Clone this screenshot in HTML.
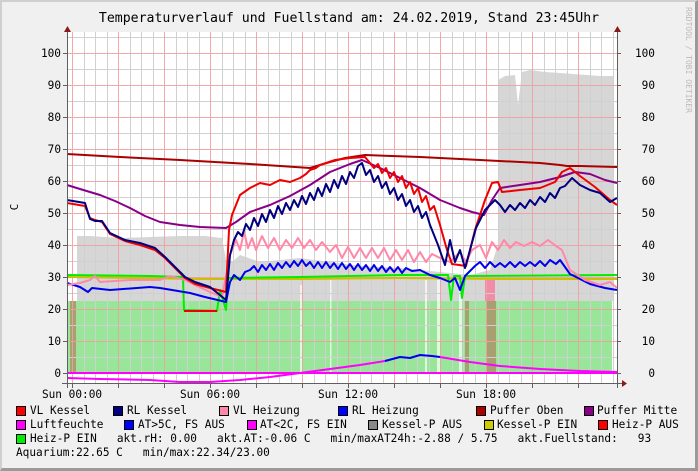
<!DOCTYPE html>
<html><head><meta charset="utf-8"><style>
html,body{margin:0;padding:0}
body{width:698px;height:471px;background:#f0f0f0;position:relative;overflow:hidden;font-family:"DejaVu Sans Mono","Liberation Mono",monospace;}
.frame{position:absolute;left:0;top:0;border-top:2px solid #cfcfcf;border-left:2px solid #cfcfcf;border-right:3px solid #9a9a9a;border-bottom:3px solid #9a9a9a;box-sizing:border-box;width:698px;height:471px}
.t{position:absolute;font-size:11.1px;color:#000;white-space:pre;line-height:12px}
.sq{position:absolute;width:8px;height:8px;border:1px solid #000}
</style></head><body>
<div class="frame"></div>
<svg width="698" height="471" style="position:absolute;left:0;top:0" xmlns="http://www.w3.org/2000/svg">
<rect x="67" y="32" width="550" height="351" fill="#fff"/>
<polygon fill="#d6d6d6" points="77,301 77,236 90,236 120,238 150,237 180,236 205,236 222,238 226,260 232,262 240,255 260,262 300,258 330,262 360,266 400,268 440,272 470,275 490,270 498,244 498,80 505,76 515,75 518,105 522,72 530,70 545,72 560,73 600,76 614,76 614,301"/>
<rect x="67" y="301" width="545" height="72" fill="#99e599"/>
<g fill="#fff" opacity="0.7"><rect x="300" y="285" width="2" height="88"/><rect x="330" y="280" width="1.5" height="93"/><rect x="425" y="280" width="2" height="93"/><rect x="437" y="280" width="3" height="93"/><rect x="459" y="290" width="3" height="83"/></g>
<rect x="485" y="280" width="10" height="21" fill="#f08ca8"/>
<g fill="#a8a070"><rect x="70" y="301" width="6" height="72"/><rect x="465" y="301" width="4" height="72"/><rect x="486" y="301" width="10" height="72"/></g>
<g stroke="#d0d0d0" stroke-width="1">
<path d="M67.5,357.5H617M67.5,325.5H617M67.5,293.5H617M67.5,261.5H617M67.5,229.5H617M67.5,197.5H617M67.5,165.5H617M67.5,133.5H617M67.5,101.5H617M67.5,69.5H617M67.5,37.5H617"/>
<path d="M84.5,32V383M95.5,32V383M107.5,32V383M130.5,32V383M141.5,32V383M153.5,32V383M176.5,32V383M187.5,32V383M199.5,32V383M222.5,32V383M233.5,32V383M245.5,32V383M268.5,32V383M279.5,32V383M291.5,32V383M314.5,32V383M325.5,32V383M337.5,32V383M360.5,32V383M371.5,32V383M383.5,32V383M406.5,32V383M417.5,32V383M429.5,32V383M452.5,32V383M463.5,32V383M475.5,32V383M498.5,32V383M509.5,32V383M521.5,32V383M544.5,32V383M555.5,32V383M567.5,32V383M590.5,32V383M601.5,32V383M613.5,32V383"/>
</g>
<g stroke="#f0a0a0" stroke-width="1" opacity="0.9">
<path d="M67.5,373.5H617M67.5,341.5H617M67.5,309.5H617M67.5,277.5H617M67.5,245.5H617M67.5,213.5H617M67.5,181.5H617M67.5,149.5H617M67.5,117.5H617M67.5,85.5H617M67.5,53.5H617"/>
<path d="M72.5,32V383M118.5,32V383M164.5,32V383M210.5,32V383M256.5,32V383M302.5,32V383M348.5,32V383M394.5,32V383M440.5,32V383M486.5,32V383M532.5,32V383M578.5,32V383"/>
</g>
<g fill="none" stroke-width="2" stroke-linejoin="round">
<polyline stroke="#ccc000" points="67,277 200,279 300,279 400,278 500,279 617,279"/>
<polyline stroke="#00ee00" points="67,275 150,276 183,277 184,310 217,311 220,290 226,310 228,278 300,277 400,275 448,275 451,300 454,276 460,276 462,298 465,276 617,275"/>
<polyline stroke="#ee0000" points="184,311 217,311"/>
<polyline stroke="#0000ee" points="67,283 80,287 88,292 92,288 110,290 150,287 160,288 190,293 205,297 226,302 230,282 234,275 240,280 245,272 250,270 254,266 258,272 262,265 266,270 270,264 274,270 278,263 282,268 286,262 290,267 294,261 298,266 302,260 306,266 310,262 314,268 318,262 322,268 326,262 330,268 334,263 338,269 342,263 346,269 350,264 354,270 358,264 362,270 366,265 370,271 374,265 378,271 382,266 386,272 390,267 394,272 398,267 402,273 406,268 412,271 420,270 430,275 440,278 450,282 455,278 460,290 465,276 475,266 480,262 485,268 490,262 495,267 500,263 505,267 510,262 515,267 520,262 525,266 530,262 535,266 540,261 545,266 550,260 556,264 560,260 570,274 590,284 605,288 617,290"/>
<polyline stroke="#ff88aa" points="67,285 80,283 90,280 95,276 100,282 130,280 160,280 170,276 185,280 195,285 210,292 222,297 230,255 236,240 240,250 244,232 248,248 252,238 256,250 262,236 268,248 274,238 280,250 286,240 292,248 298,238 304,248 310,240 316,250 322,242 330,252 336,245 342,258 348,247 354,258 360,248 366,258 372,248 378,258 384,248 390,260 396,250 402,260 408,250 414,262 420,252 426,262 432,254 440,258 450,262 460,252 466,262 472,250 480,245 486,258 492,242 498,250 504,240 510,248 516,242 524,246 532,242 540,246 548,240 556,246 562,250 570,270 585,280 600,285 610,282 617,288"/>
<polyline stroke="#880088" points="67,185 80,189 100,195 115,201 130,208 145,216 160,222 180,225 200,227 226,228 236,222 250,212 270,205 290,196 310,185 330,172 350,164 362,160 380,168 400,178 420,188 440,200 460,208 472,212 484,215 492,200 500,188 520,185 540,182 560,177 575,172 590,174 605,180 617,183"/>
<polyline stroke="#aa0000" points="67,154 120,157 180,160 250,164 310,168 330,162 345,158 365,155 420,157 480,160 540,163 560,165 567,166 580,166 617,167"/>
<polyline stroke="#ee0000" points="67,203 85,206 90,218 95,220 102,222 110,234 125,241 140,245 155,250 165,258 175,268 185,278 195,284 210,288 226,292 229,230 232,215 240,195 250,188 260,183 270,185 280,180 290,182 300,178 306,174 310,170 316,168 320,165 335,160 350,158 365,157 370,163 374,168 378,164 382,173 386,168 390,178 394,172 398,182 402,176 406,188 410,182 414,194 418,188 422,202 426,196 430,210 434,206 440,225 447,250 452,264 466,266 475,230 485,200 492,183 498,182 502,192 520,190 540,188 555,182 562,172 570,168 580,176 595,187 610,200 617,205"/>
<polyline stroke="#000080" points="67,200 85,203 90,219 95,221 102,221 110,233 125,240 140,243 155,248 165,257 175,267 185,277 195,282 210,287 226,300 230,255 234,240 238,232 242,236 246,224 250,230 254,218 258,226 262,214 266,222 270,210 274,218 278,206 282,214 286,203 290,210 294,200 298,207 302,196 306,204 310,193 314,200 318,188 322,196 326,184 330,192 334,180 338,188 342,176 346,184 350,172 354,178 358,166 362,163 366,175 370,170 374,182 378,176 382,188 386,182 390,194 394,188 398,200 402,194 406,206 410,200 414,212 418,206 422,218 426,212 430,225 438,245 445,265 450,240 455,262 460,250 465,268 470,250 476,228 485,210 495,200 500,205 505,212 510,205 515,210 520,203 525,208 530,200 535,205 540,197 545,202 550,193 555,198 560,188 565,186 572,178 580,185 590,190 600,193 610,202 617,198"/>
<polyline stroke="#ff00ff" points="67,373 617,373"/>
<polyline stroke="#ff00ff" points="67,378 100,379 150,380 180,382 210,382 240,380 270,377 300,373 330,369 360,365 385,361"/>
<polyline stroke="#0000ee" points="385,361 400,357 410,358 420,355 432,356 440,357"/>
<polyline stroke="#ff00ff" points="440,357 470,362 500,366 540,369 580,371 617,372"/>
</g>
<g stroke="#606060" stroke-width="1">
<path d="M67.5,27V388M617.5,27V388M62,383.5H622"/>
<path d="M63,373.5H67M63,341.5H67M63,309.5H67M63,277.5H67M63,245.5H67M63,213.5H67M63,181.5H67M63,149.5H67M63,117.5H67M63,85.5H67M63,53.5H67M617,373.5H621M617,341.5H621M617,309.5H621M617,277.5H621M617,245.5H621M617,213.5H621M617,181.5H621M617,149.5H621M617,117.5H621M617,85.5H621M617,53.5H621"/>
<path d="M72.5,383V388M118.5,383V388M164.5,383V388M210.5,383V388M256.5,383V388M302.5,383V388M348.5,383V388M394.5,383V388M440.5,383V388M486.5,383V388M532.5,383V388M578.5,383V388"/>
</g>
<g fill="#8b1a1a"><polygon points="64,32 71,32 67.5,26"/><polygon points="614,32 621,32 617.5,26"/><polygon points="622,380 622,387 627,383.5"/></g>
<text x="349" y="22" font-family="DejaVu Sans Mono, monospace" font-size="13.2" text-anchor="middle">Temperaturverlauf und Fuellstand am: 24.02.2019, Stand 23:45Uhr</text>
<g font-family="DejaVu Sans Mono, monospace" font-size="11.1" text-anchor="end">
<text x="61" y="57">100</text><text x="61" y="89">90</text><text x="61" y="121">80</text><text x="61" y="153">70</text><text x="61" y="185">60</text><text x="61" y="217">50</text><text x="61" y="249">40</text><text x="61" y="281">30</text><text x="61" y="313">20</text><text x="61" y="345">10</text><text x="61" y="377">0</text>
</g>
<g font-family="DejaVu Sans Mono, monospace" font-size="11.1" text-anchor="end">
<text x="655" y="57">100</text><text x="655" y="89">90</text><text x="655" y="121">80</text><text x="655" y="153">70</text><text x="655" y="185">60</text><text x="655" y="217">50</text><text x="655" y="249">40</text><text x="655" y="281">30</text><text x="655" y="313">20</text><text x="655" y="345">10</text><text x="655" y="377">0</text>
</g>
<g font-family="DejaVu Sans Mono, monospace" font-size="11.1" text-anchor="middle">
<text x="72" y="398">Sun 00:00</text><text x="210" y="398">Sun 06:00</text><text x="348" y="398">Sun 12:00</text><text x="486" y="398">Sun 18:00</text>
</g>
<text transform="translate(18,207) rotate(-90)" font-family="DejaVu Sans Mono, monospace" font-size="11" text-anchor="middle">C</text>
<text transform="translate(686,7) rotate(90)" font-family="DejaVu Sans Mono, monospace" font-size="8" fill="#bbb">RRDTOOL / TOBI OETIKER</text>
</svg>
<div class="sq" style="left:16px;top:406px;background:#ff0000"></div><div class="t" style="left:30px;top:405px">VL Kessel</div>
<div class="sq" style="left:113px;top:406px;background:#000080"></div><div class="t" style="left:127px;top:405px">RL Kessel</div>
<div class="sq" style="left:219px;top:406px;background:#ff88aa"></div><div class="t" style="left:233px;top:405px">VL Heizung</div>
<div class="sq" style="left:338px;top:406px;background:#0000ff"></div><div class="t" style="left:352px;top:405px">RL Heizung</div>
<div class="sq" style="left:476px;top:406px;background:#aa0000"></div><div class="t" style="left:490px;top:405px">Puffer Oben</div>
<div class="sq" style="left:584px;top:406px;background:#880088"></div><div class="t" style="left:597px;top:405px">Puffer Mitte</div>
<div class="sq" style="left:16px;top:420px;background:#ff00ff"></div><div class="t" style="left:30px;top:419px">Luftfeuchte</div>
<div class="sq" style="left:124px;top:420px;background:#0000ff"></div><div class="t" style="left:138px;top:419px">AT&gt;5C, FS AUS</div>
<div class="sq" style="left:247px;top:420px;background:#ff00ff"></div><div class="t" style="left:260px;top:419px">AT&lt;2C, FS EIN</div>
<div class="sq" style="left:368px;top:420px;background:#888888"></div><div class="t" style="left:382px;top:419px">Kessel-P AUS</div>
<div class="sq" style="left:484px;top:420px;background:#cccc00"></div><div class="t" style="left:497px;top:419px">Kessel-P EIN</div>
<div class="sq" style="left:598px;top:420px;background:#ff0000"></div><div class="t" style="left:612px;top:419px">Heiz-P AUS</div>
<div class="sq" style="left:16px;top:434px;background:#00ee00"></div><div class="t" style="left:30px;top:433px">Heiz-P EIN   akt.rH: 0.00   akt.AT:-0.06 C   min/maxAT24h:-2.88 / 5.75   akt.Fuellstand:   93</div>
<div class="t" style="left:16px;top:447px">Aquarium:22.65 C   min/max:22.34/23.00</div>
</body></html>
